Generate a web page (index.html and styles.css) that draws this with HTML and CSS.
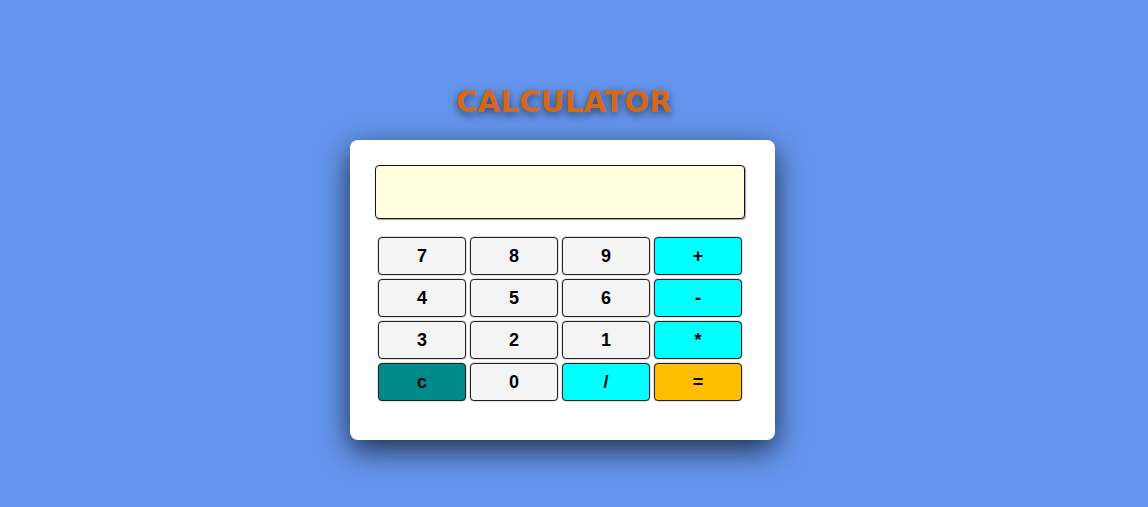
FILE: index.html
```html
<!DOCTYPE html>
<html>
<head>
<meta charset="utf-8">
<link rel="stylesheet" href="styles.css">
</head>
<body>
<div class="page">
  <h1 class="title">CALCULATOR</h1>
  <div class="calc">
    <div class="display"></div>
    <div class="keys">
      <button class="key">7</button>
      <button class="key">8</button>
      <button class="key">9</button>
      <button class="key op">+</button>
      <button class="key">4</button>
      <button class="key">5</button>
      <button class="key">6</button>
      <button class="key op">-</button>
      <button class="key">3</button>
      <button class="key">2</button>
      <button class="key">1</button>
      <button class="key op">*</button>
      <button class="key clear">c</button>
      <button class="key">0</button>
      <button class="key op">/</button>
      <button class="key eq">=</button>
    </div>
  </div>
</div>
</body>
</html>
```
FILE: styles.css
```css
html, body {
  margin: 0;
  padding: 0;
  background: #6495ed;
}
body {
  width: 1148px;
  height: 507px;
  overflow: hidden;
}
.page {
  display: flex;
  flex-direction: column;
  align-items: center;
  padding-top: 84px;
  padding-right: 23px;
}
.title {
  margin: 0 0 20px 0;
  padding-left: 3px;
  font-family: "DejaVu Sans", sans-serif;
  font-weight: 700;
  font-size: 29.5px;
  line-height: 36px;
  color: #d2691e;
  text-shadow: 0 3px 8px rgba(0, 0, 0, 0.6);
}
.calc {
  width: 375px;
  padding: 25px 25px 39px 25px;
  background: #fff;
  border-radius: 8px;
  box-shadow: 0 10px 30px rgba(0, 0, 0, 0.7);
  display: flex;
  flex-direction: column;
  align-items: flex-start;
}
.display {
  width: 368px;
  height: 52px;
  background: #ffffe0;
  border: 1px solid #111;
  border-radius: 4px;
  box-shadow: 1px 1px 1px rgba(0, 0, 0, 0.35);
}
.keys {
  margin: 18px 0 0 3px;
  display: grid;
  grid-template-columns: repeat(4, 88px);
  grid-auto-rows: 38px;
  gap: 4px;
}
.key {
  margin: 0;
  padding: 0;
  background: #f4f4f4;
  border: 1px solid #222;
  border-radius: 4px;
  font-family: "Liberation Sans", Arial, sans-serif;
  font-weight: 700;
  font-size: 18px;
  color: #000;
  box-shadow: 0 0 0 0.5px rgba(0, 0, 0, 0.25);
}
.op {
  background: #00ffff;
}
.clear {
  background: #008b8b;
}
.eq {
  background: #ffbf00;
}
```
